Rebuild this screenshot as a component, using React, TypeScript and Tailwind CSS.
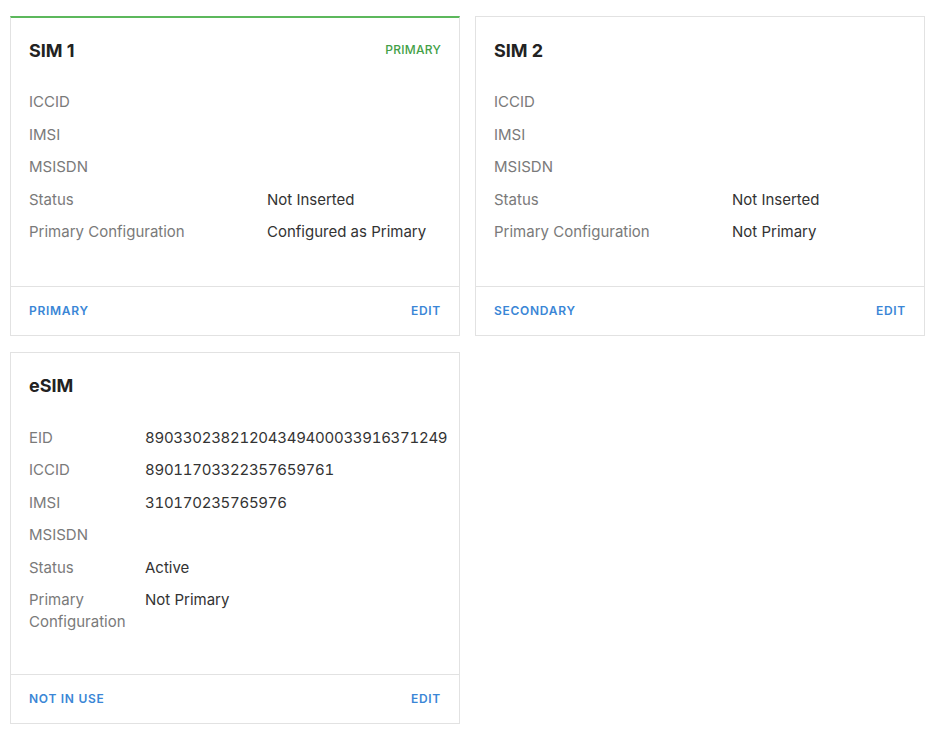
type Row = { label: string; value?: string };

type SimCardProps = {
  title: string;
  rows: Row[];
  labelWidth: string;
  footerLeft: string;
  primary?: boolean;
  tight?: boolean;
};

function SimCard({ title, rows, labelWidth, footerLeft, primary, tight }: SimCardProps) {
  return (
    <div
      className={
        "flex flex-col border border-[#e2e2e2] bg-white " +
        (primary ? "border-t-2 border-t-[#5cb85c]" : "")
      }
    >
      <div
        className={
          "px-[18px] " +
          (primary ? "pt-[20px] " : "pt-[21px] ") +
          (tight ? "pb-[35px]" : "pb-[37px]")
        }
      >
        <div className="mb-6 flex h-6 items-center justify-between">
          <h2 className="text-[18px] font-bold text-[#222]">{title}</h2>
          {primary && (
            <span className="text-[12px] font-medium tracking-[0.02em] text-[#43a047]">PRIMARY</span>
          )}
        </div>
        <div className="flex flex-col">
          {rows.map((r) => {
            const numeric = !!r.value && /^\d+$/.test(r.value);
            return (
              <div key={r.label} className="flex py-[5.25px] text-[15px] leading-[22px]">
                <div className="shrink-0 pr-4 text-[#7a7a7a]" style={{ width: labelWidth }}>
                  {r.label}
                </div>
                <div className={numeric ? "tabular-nums tracking-[-0.28px] text-[#333]" : "text-[#333]"}>
                  {r.value}
                </div>
              </div>
            );
          })}
        </div>
      </div>
      <div className="mt-auto flex h-[49px] items-center justify-between border-t border-[#e2e2e2] px-[18px] text-[12px] font-semibold tracking-[0.06em] text-[#3a86d6]">
        <button>{footerLeft}</button>
        <button>EDIT</button>
      </div>
    </div>
  );
}

export default function App() {
  return (
    <div className="min-h-screen bg-white pl-[10px] pt-[16px] font-['Inter',sans-serif]">
      <div className="grid grid-cols-[450px_450px] gap-x-[15px] gap-y-4">
        <SimCard
          title="SIM 1"
          primary
          labelWidth="238px"
          footerLeft="PRIMARY"
          rows={[
            { label: "ICCID" },
            { label: "IMSI" },
            { label: "MSISDN" },
            { label: "Status", value: "Not Inserted" },
            { label: "Primary Configuration", value: "Configured as Primary" },
          ]}
        />
        <SimCard
          title="SIM 2"
          labelWidth="238px"
          footerLeft="SECONDARY"
          rows={[
            { label: "ICCID" },
            { label: "IMSI" },
            { label: "MSISDN" },
            { label: "Status", value: "Not Inserted" },
            { label: "Primary Configuration", value: "Not Primary" },
          ]}
        />
        <SimCard
          title="eSIM"
          labelWidth="116px"
          footerLeft="NOT IN USE"
          tight
          rows={[
            { label: "EID", value: "89033023821204349400033916371249" },
            { label: "ICCID", value: "89011703322357659761" },
            { label: "IMSI", value: "310170235765976" },
            { label: "MSISDN" },
            { label: "Status", value: "Active" },
            { label: "Primary Configuration", value: "Not Primary" },
          ]}
        />
      </div>
    </div>
  );
}
